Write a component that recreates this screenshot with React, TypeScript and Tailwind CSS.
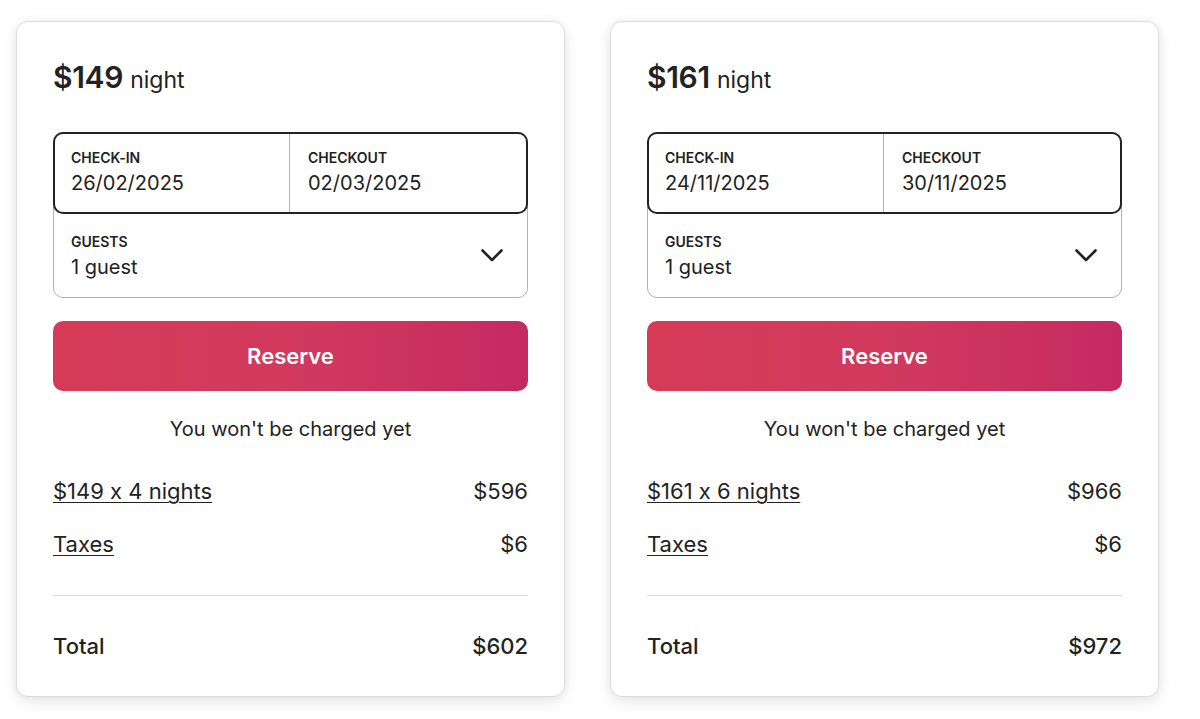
import React from "react";

type Booking = {
  price: string;
  checkIn: string;
  checkOut: string;
  nightsLabel: string;
  nightsTotal: string;
  taxes: string;
  total: string;
};

const bookings: Booking[] = [
  {
    price: "$149",
    checkIn: "26/02/2025",
    checkOut: "02/03/2025",
    nightsLabel: "$149 x 4 nights",
    nightsTotal: "$596",
    taxes: "$6",
    total: "$602",
  },
  {
    price: "$161",
    checkIn: "24/11/2025",
    checkOut: "30/11/2025",
    nightsLabel: "$161 x 6 nights",
    nightsTotal: "$966",
    taxes: "$6",
    total: "$972",
  },
];

function Chevron() {
  return (
    <svg width="22" height="13" viewBox="0 0 22 13" fill="none" aria-hidden="true">
      <path
        d="M1.5 1.5 L11 11 L20.5 1.5"
        stroke="#222222"
        strokeWidth="2.6"
        strokeLinecap="round"
        strokeLinejoin="round"
      />
    </svg>
  );
}

function Card({ b }: { b: Booking }) {
  return (
    <div className="w-[549px] shrink-0 rounded-[12px] border border-[#dddddd] bg-white px-[36px] pt-[38px] pb-[36px] shadow-[0_0_10px_rgba(0,0,0,0.06),0_6px_16px_rgba(0,0,0,0.08)]">
      <div className="flex items-baseline leading-[34px]">
        <span className="text-[30px] font-semibold tracking-[-0.3px]">{b.price}</span>
        <span className="ml-[7px] text-[23px]">night</span>
      </div>

      <div className="mt-[35px] rounded-[10px] border border-[#b0b0b0]">
        <div className="-mx-px -mt-px flex h-[82px] rounded-[10px] border-2 border-[#222222]">
          <div className="flex-1 border-r border-[#b0b0b0] pl-[16px] pt-[16px]">
            <div className="text-[14px] font-semibold leading-[16px]">CHECK-IN</div>
            <div className="mt-[5px] text-[20px] leading-[24px]">{b.checkIn}</div>
          </div>
          <div className="flex-1 pl-[18px] pt-[16px]">
            <div className="text-[14px] font-semibold leading-[16px]">CHECKOUT</div>
            <div className="mt-[5px] text-[20px] leading-[24px]">{b.checkOut}</div>
          </div>
        </div>
        <div className="flex h-[83px] items-center justify-between pl-[17px] pr-[24px]">
          <div className="pt-[2px]">
            <div className="text-[14px] font-semibold leading-[16px]">GUESTS</div>
            <div className="mt-[5px] text-[20px] leading-[24px]">1 guest</div>
          </div>
          <Chevron />
        </div>
      </div>

      <button className="mt-[23px] flex h-[70px] w-full items-center justify-center rounded-[10px] bg-gradient-to-r from-[#d63a57] via-[#d13a5e] to-[#c42a62] text-[22px] font-semibold text-white">
        Reserve
      </button>

      <div className="mt-[26px] text-center text-[20px] leading-[24px]">You won't be charged yet</div>

      <div className="mt-[36px] flex items-center justify-between text-[22px] leading-[28px]">
        <span className="underline decoration-1 underline-offset-[3px]">{b.nightsLabel}</span>
        <span>{b.nightsTotal}</span>
      </div>
      <div className="mt-[25px] flex items-center justify-between text-[22px] leading-[28px]">
        <span className="underline decoration-1 underline-offset-[3px]">Taxes</span>
        <span>{b.taxes}</span>
      </div>

      <div className="mt-[37px] h-px bg-[#dddddd]" />

      <div className="mt-[36px] flex items-center justify-between text-[22px] font-medium leading-[28px]">
        <span>Total</span>
        <span>{b.total}</span>
      </div>
    </div>
  );
}

export default function App() {
  return (
    <div
      className="min-h-[719px] w-[1200px] bg-white text-[#222222] [font-feature-settings:'calt'_0]"
      style={{ fontFamily: "Inter, 'Noto Sans', sans-serif" }}
    >
      <div className="flex gap-[45px] pl-[16px] pt-[21px]">
        {bookings.map((b) => (
          <Card key={b.price} b={b} />
        ))}
      </div>
    </div>
  );
}
